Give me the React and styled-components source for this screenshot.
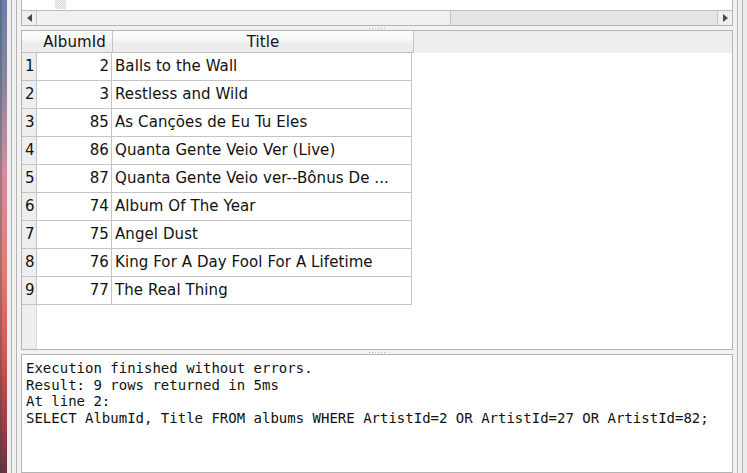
import styled, { createGlobalStyle } from 'styled-components';

const GlobalStyle = createGlobalStyle`
  html, body {
    margin: 0;
    padding: 0;
    overflow: hidden;
    background: #efefef;
  }
`;

const rows = [
  { id: 2, title: 'Balls to the Wall' },
  { id: 3, title: 'Restless and Wild' },
  { id: 85, title: 'As Canções de Eu Tu Eles' },
  { id: 86, title: 'Quanta Gente Veio Ver (Live)' },
  { id: 87, title: 'Quanta Gente Veio ver--Bônus De ...' },
  { id: 74, title: 'Album Of The Year' },
  { id: 75, title: 'Angel Dust' },
  { id: 76, title: 'King For A Day Fool For A Lifetime' },
  { id: 77, title: 'The Real Thing' },
];

const log = [
  'Execution finished without errors.',
  'Result: 9 rows returned in 5ms',
  'At line 2:',
  'SELECT AlbumId, Title FROM albums WHERE ArtistId=2 OR ArtistId=27 OR ArtistId=82;',
];

const Screen = styled.div`
  display: flex;
  width: 747px;
  height: 473px;
  overflow: hidden;
`;

const Wallpaper = styled.div`
  width: 7px;
  flex-shrink: 0;
  background:
    linear-gradient(to right, rgba(20, 80, 80, 0.3) 0 2px, transparent 2px),
    linear-gradient(
      to bottom,
      #6e7ca8 0%,
      #8c84a0 18%,
      #d48e9e 36%,
      #e07e76 56%,
      #d6645c 70%,
      #b04648 84%,
      #70303e 100%
    );
`;

const Frame = styled.div`
  flex: 1;
  display: flex;
  min-width: 0;
  padding: 0 ${(p) => p.$pad}px;
  background: ${(p) => p.$bg};
  border-left: ${(p) => (p.$lined ? '1px solid #b4b4b4' : 'none')};
  border-right: ${(p) => (p.$lined ? '1px solid #b4b4b4' : 'none')};
`;

const Content = styled.div`
  flex: 1;
  min-width: 0;
  display: flex;
  flex-direction: column;
`;

const TopPanel = styled.div`
  height: 25px;
  display: flex;
  flex-direction: column;
  background: #fff;
  border: 1px solid #b4b4b4;
  border-top: none;
`;

const EditorArea = styled.div`
  height: 10px;
  display: flex;
`;

const Checker = styled.div`
  width: 11px;
  height: 9px;
  margin-left: 33px;
  background: repeating-conic-gradient(#d6d6d6 0% 25%, #f4f4f4 0% 50%) 0 0 / 2px 2px;
`;

const ScrollBar = styled.div`
  height: 14px;
  display: flex;
  border-top: 1px solid #bcbcbc;
  background: #e5e5e5;
`;

const ArrowButton = styled.div`
  width: 14px;
  display: flex;
  align-items: center;
  justify-content: center;
  background: #efefef;
  border-${(p) => (p.$side === 'left' ? 'right' : 'left')}: 1px solid #c8c8c8;
`;

const Arrow = styled.div`
  width: 0;
  height: 0;
  border-top: 4px solid transparent;
  border-bottom: 4px solid transparent;
  border-${(p) => (p.$side === 'left' ? 'right' : 'left')}: 5px solid #4a4a4a;
`;

const Thumb = styled.div`
  width: 413px;
  background: #f1f1f1;
  border-right: 1px solid #c4c4c4;
`;

const Track = styled.div`
  flex: 1;
`;

const Splitter = styled.div`
  height: 4px;
  display: flex;
  align-items: center;
  justify-content: center;
`;

const Dots = styled.div`
  width: 17px;
  height: 1px;
  background: repeating-linear-gradient(to right, #b4b4b4 0 1px, transparent 1px 3px);
`;

const TablePanel = styled.div`
  height: 318px;
  display: flex;
  flex-direction: column;
  background: #fff;
  border: 1px solid #b4b4b4;
  font-family: 'DejaVu Sans', 'Liberation Sans', sans-serif;
  font-size: 15px;
  letter-spacing: 0.08px;
  color: #111;
`;

const HeaderRow = styled.div`
  display: flex;
  height: 22px;
  background: #eeeeee;
`;

const HeaderCell = styled.div`
  width: ${(p) => p.$w}px;
  display: flex;
  align-items: center;
  justify-content: center;
  background: linear-gradient(to bottom, #fbfbfb 0%, #f6f6f6 45%, #eeeeee 55%, #ececec 100%);
  border-bottom: 1px solid #bdbdbd;
  border-right: ${(p) => (p.$divider ? '1px solid #c6c6c6' : 'none')};
`;

const Row = styled.div`
  display: flex;
  height: 28px;
`;

const Cell = styled.div`
  width: ${(p) => p.$w}px;
  display: flex;
  align-items: center;
  justify-content: ${(p) => (p.$right ? 'flex-end' : 'flex-start')};
  padding: 0 ${(p) => (p.$right ? '2px' : '0')} 2px ${(p) => (p.$right ? '0' : '3px')};
  box-sizing: border-box;
  white-space: nowrap;
  overflow: hidden;
  background: ${(p) => (p.$gutter ? '#eeeeee' : '#fff')};
  border-right: 1px solid #c4c4c4;
  border-bottom: 1px solid #c4c4c4;
`;

const Filler = styled.div`
  flex: 1;
  display: flex;
`;

const GutterFill = styled.div`
  width: 14px;
  background: #eeeeee;
  border-right: 1px solid #d8d8d8;
`;

const LogPanel = styled.div`
  flex: 1;
  background: #fff;
  border: 1px solid #b4b4b4;
  padding: 5px 4px;
  font-family: 'DejaVu Sans Mono', 'Liberation Mono', monospace;
  font-size: 14px;
  line-height: 16.7px;
  color: #111;
  white-space: pre;
`;

export default function App() {
  return (
    <>
      <GlobalStyle />
      <Screen>
        <Wallpaper />
        <Frame $pad={4} $bg="#ececec">
          <Frame $pad={4} $bg="#efefef" $lined>
            <Frame $pad={4} $bg="#f2f2f2" $lined>
              <Content>
                <TopPanel>
                  <EditorArea>
                    <Checker />
                  </EditorArea>
                  <ScrollBar>
                    <ArrowButton $side="left">
                      <Arrow $side="left" />
                    </ArrowButton>
                    <Thumb />
                    <Track />
                    <ArrowButton $side="right">
                      <Arrow $side="right" />
                    </ArrowButton>
                  </ScrollBar>
                </TopPanel>
                <Splitter>
                  <Dots />
                </Splitter>
                <TablePanel>
                  <HeaderRow>
                    <HeaderCell $w={15} />
                    <HeaderCell $w={75} $divider>
                      AlbumId
                    </HeaderCell>
                    <HeaderCell $w={300} $divider>
                      Title
                    </HeaderCell>
                  </HeaderRow>
                  {rows.map((r, i) => (
                    <Row key={r.id}>
                      <Cell $w={15} $gutter>
                        {i + 1}
                      </Cell>
                      <Cell $w={75} $right>
                        {r.id}
                      </Cell>
                      <Cell $w={300}>{r.title}</Cell>
                    </Row>
                  ))}
                  <Filler>
                    <GutterFill />
                  </Filler>
                </TablePanel>
                <Splitter>
                  <Dots />
                </Splitter>
                <LogPanel>{log.join('\n')}</LogPanel>
              </Content>
            </Frame>
          </Frame>
        </Frame>
      </Screen>
    </>
  );
}
